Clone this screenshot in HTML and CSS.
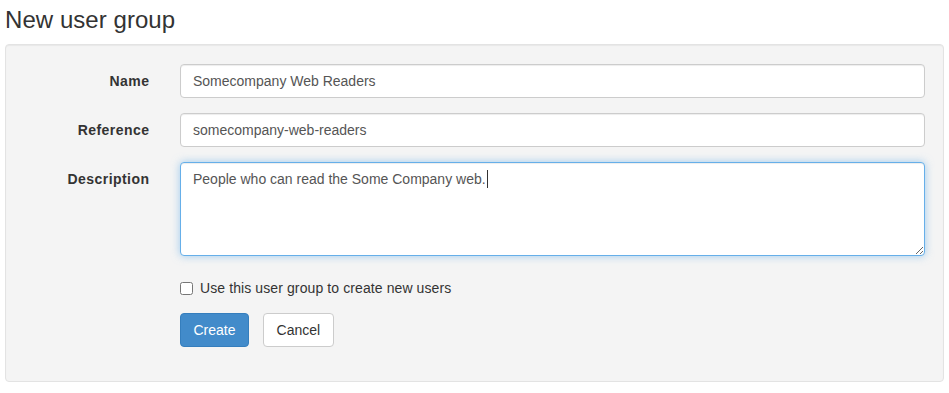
FILE: index.html
```html
<!DOCTYPE html>
<html lang="en">
<head>
<meta charset="utf-8">
<title>New user group</title>
<link rel="stylesheet" href="styles.css">
</head>
<body>
  <h1 class="page-title">New user group</h1>
  <form class="well form-horizontal">
    <div class="form-group">
      <label class="control-label" for="name">Name</label>
      <div class="control"><input class="form-control" id="name" type="text" value="Somecompany Web Readers"></div>
    </div>
    <div class="form-group">
      <label class="control-label" for="ref">Reference</label>
      <div class="control"><input class="form-control" id="ref" type="text" value="somecompany-web-readers"></div>
    </div>
    <div class="form-group">
      <label class="control-label">Description</label>
      <div class="control"><div class="form-control textarea focused">People who can read the Some Company web.<span class="caret"></span></div></div>
    </div>
    <div class="form-group">
      <div class="control offset">
        <label class="checkbox"><input type="checkbox"> Use this user group to create new users</label>
      </div>
    </div>
    <div class="form-group">
      <div class="control offset buttons">
        <button type="button" class="btn btn-primary">Create</button>
        <button type="button" class="btn btn-default">Cancel</button>
      </div>
    </div>
  </form>
</body>
</html>
```

FILE: styles.css
```css
* { box-sizing: border-box; }
html, body { margin: 0; padding: 0; background: #fff; }
body {
  font-family: "Liberation Sans", Arial, Helvetica, sans-serif;
  font-size: 14px;
  line-height: 20px;
  color: #333;
  padding: 0 5px;
}
.page-title {
  font-size: 24px;
  font-weight: 400;
  line-height: 26px;
  margin: 7px 0 11px 0;
  color: #333;
  letter-spacing: 0.05px;
}
.well {
  background: #f4f4f4;
  border: 1px solid #e3e3e3;
  border-radius: 4px;
  box-shadow: inset 0 1px 1px rgba(0,0,0,.05);
  padding: 19px 18px 19px 19px;
  margin: 0;
}
.form-group {
  display: grid;
  grid-template-columns: 124px 1fr;
  column-gap: 31px;
  margin-bottom: 15px;
}
.control-label {
  text-align: right;
  font-weight: 700;
  padding-top: 7px;
  letter-spacing: 0.45px;
  margin-right: -0.45px;
}
.control { grid-column: 2; }
.form-control {
  display: block;
  width: 100%;
  height: 34px;
  padding: 6px 12px;
  font-family: inherit;
  font-size: 14px;
  line-height: 20px;
  color: #555;
  background: #fff;
  border: 1px solid #ccc;
  border-radius: 4px;
  box-shadow: inset 0 1px 1px rgba(0,0,0,.075);
  margin: 0;
}
.textarea {
  height: 94px;
  overflow: auto;
  resize: vertical;
}
.focused {
  border-color: #66afe9;
  box-shadow: inset 0 1px 1px rgba(0,0,0,.075), 0 0 8px rgba(102,175,233,.6);
}
.caret {
  display: inline-block;
  width: 1px;
  height: 18px;
  background: #333;
  vertical-align: -4px;
  margin-left: 1px;
}
.checkbox {
  display: flex;
  align-items: center;
  gap: 7px;
  padding-top: 7px;
  line-height: 20px;
  font-weight: 400;
  color: #333;
  letter-spacing: 0.1px;
}
.checkbox input {
  margin: 0;
  width: 13px;
  height: 13px;
}
.buttons { display: flex; gap: 14px; }
.btn {
  display: inline-block;
  height: 34px;
  padding: 6px 12.5px;
  font-family: inherit;
  font-size: 14px;
  line-height: 20px;
  border: 1px solid transparent;
  border-radius: 4px;
  cursor: pointer;
}
.btn-primary {
  background: #428bca;
  border-color: #357ebd;
  color: #fff;
}
.btn-default {
  background: #fff;
  border-color: #ccc;
  color: #333;
}
```
